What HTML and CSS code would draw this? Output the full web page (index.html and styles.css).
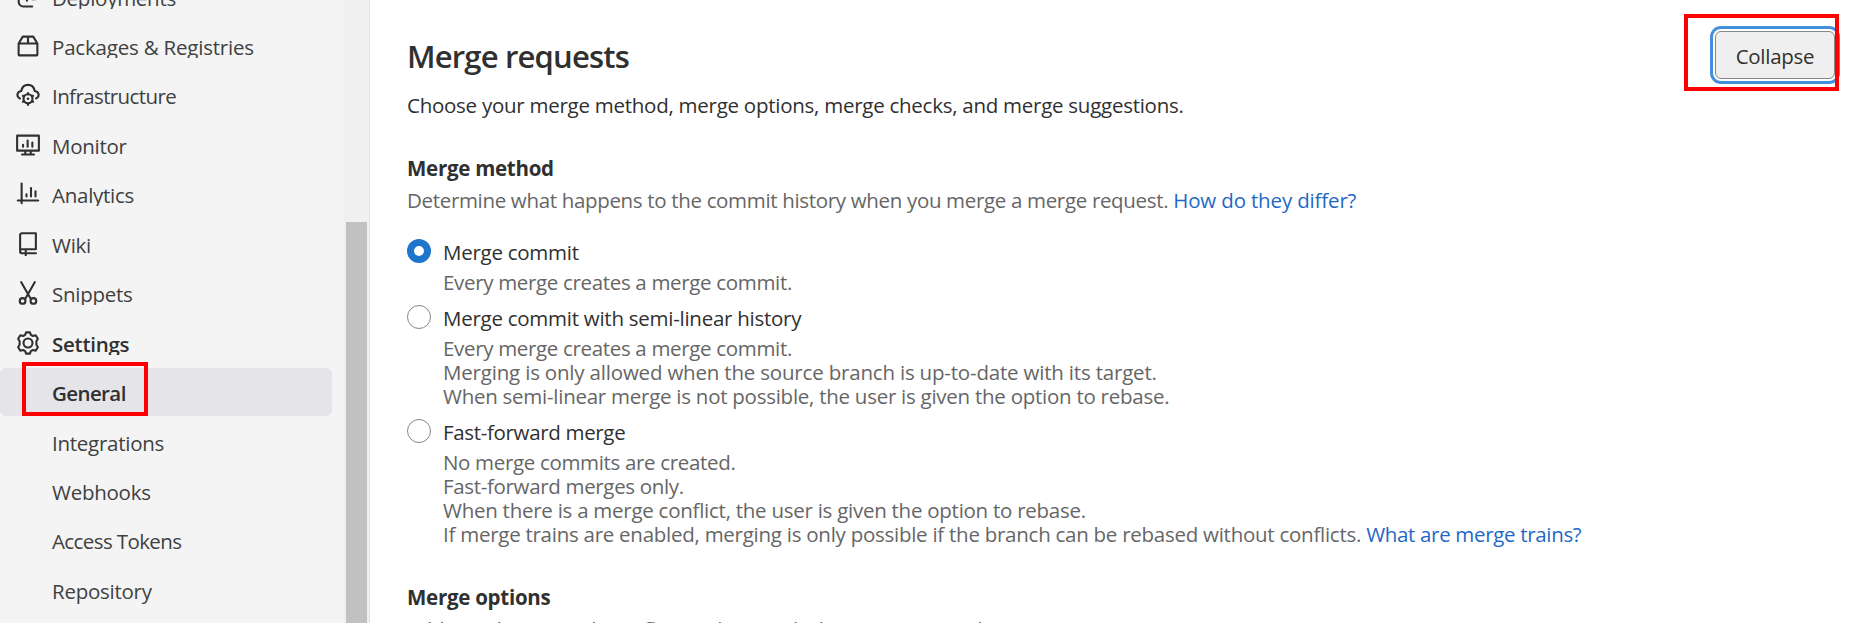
FILE: index.html
```html
<!DOCTYPE html>
<html lang="en">
<head>
<meta charset="utf-8">
<title>General settings</title>
<link rel="stylesheet" href="styles.css">
</head>
<body>
<div class="page">
  <aside class="sidebar">
    <nav class="nav">
      <a class="item"><svg class="icon" viewBox="0 0 16 16"><path d="M1.8 9.500v1.800a3 3 0 0 0 3 3h6M7.300 9.500v1M11 9.500h1.200l1.800-.2"/></svg><span class="name">Deployments</span></a>
      <a class="item"><svg class="icon" viewBox="0 0 16 16"><path d="M1.750 6.300v7.450a.5.5 0 0 0 .5.5h11.500a.5.5 0 0 0 .5-.5V6.300M1.750 6.300 4.500 1.750h7l2.750 4.550zM8 1.750v4.500"/></svg><span class="name wide">Packages &amp; Registries</span></a>
      <a class="item"><svg class="icon" viewBox="0 0 16 16"><path d="M2.600 10.300C.2 9.200.4 5.600 3.600 5.300 4 2.500 5.800 1.250 8 1.250s4 1.300 4.400 4.050c3.200.3 3.500 3.900 1 5"/><circle cx="8" cy="10.500" r="3"/><circle class="solid" cx="8" cy="10.500" r=".9"/><path d="M8 6.700v.8M8 13.500v1.200M4.600 8.500l.8.500M10.600 12l.8.500M4.600 12.500l.8-.5M10.600 9l.8-.5"/></svg><span class="name narrow">Infrastructure</span></a>
      <a class="item"><svg class="icon" viewBox="0 0 16 16"><path d="M.75 1.750h14.500v10H.75zM6.200 12v2.200M9.800 12v2.200M4 14.300h8M4.700 7.800v1.300M7.750 5v4.100M10.900 6.300v2.800"/></svg><span class="name">Monitor</span></a>
      <a class="item"><svg class="icon" viewBox="0 0 16 16"><path d="M3.750 1v13.200M1.200 12.300h13.600M7 8.200v1.500M10 4v5.700M13 6.200v3.500"/></svg><span class="name">Analytics</span></a>
      <a class="item"><svg class="icon" viewBox="0 0 16 16"><path d="M2.750 12.500V2a1.200 1.200 0 0 1 1.200-1.200h9.300v10.700H4a1.250 1.250 0 0 0-1.250 1.250c0 .8.500 1.400 1.250 1.400h9.300M6.500 12v3.500"/></svg><span class="name">Wiki</span></a>
      <a class="item"><svg class="icon" viewBox="0 0 16 16"><path d="M3.500.8l6.200 10.800M12.500.8 6.300 11.600"/><circle cx="4.400" cy="13.300" r="1.900"/><circle cx="11.600" cy="13.300" r="1.900"/></svg><span class="name">Snippets</span></a>
      <a class="item current"><svg class="icon" viewBox="0 0 16 16"><path d="M6.700.9h2.600l.6 1.700 1.300.75 1.900-.45 1.500 2.300-1 1.600v2.400l1 1.600-1.500 2.300-1.900-.45-1.300.75-.6 1.700H6.700l-.6-1.700-1.300-.75-1.900.45-1.500-2.300 1-1.600V6.800l-1-1.600 1.500-2.300 1.900.45 1.300-.75z"/><circle cx="8" cy="8" r="3"/></svg><span class="name">Settings</span></a>
      <a class="item sub active"><span class="name narrow">General</span><span class="mark mark-general"></span></a>
      <a class="item sub"><span class="name">Integrations</span></a>
      <a class="item sub"><span class="name">Webhooks</span></a>
      <a class="item sub"><span class="name narrow">Access Tokens</span></a>
      <a class="item sub"><span class="name">Repository</span></a>
    </nav>
    <div class="track"><div class="thumb"></div></div>
  </aside>
  <main class="content">
    <header class="head">
      <h1 class="title">Merge requests</h1>
      <div class="action"><button class="collapse">Collapse</button><span class="mark mark-collapse"></span></div>
    </header>
    <p class="lead">Choose your merge method, merge options, merge checks, and merge suggestions.</p>
    <h2 class="subtitle">Merge method</h2>
    <p class="help"><span class="tight">Determine what happens to the commit history when you merge a merge request. </span><a class="link">How do they differ?</a></p>
    <div class="options">
      <div class="option">
        <span class="radio checked"></span>
        <div class="detail">
          <div class="label">Merge commit</div>
          <div class="help tight">Every merge creates a merge commit.</div>
        </div>
      </div>
      <div class="option">
        <span class="radio"></span>
        <div class="detail">
          <div class="label">Merge commit with semi-linear history</div>
          <div class="help"><span class="tight">Every merge creates a merge commit.</span><br><span class="loose">Merging is only allowed when the source branch is up-to-date with its target.</span><br>When semi-linear merge is not possible, the user is given the option to rebase.</div>
        </div>
      </div>
      <div class="option">
        <span class="radio"></span>
        <div class="detail">
          <div class="label tight">Fast-forward merge</div>
          <div class="help"><span class="tight">No merge commits are created.</span><br><span class="tight">Fast-forward merges only.</span><br>When there is a merge conflict, the user is given the option to rebase.<br>If merge trains are enabled, merging is only possible if the branch can be rebased without conflicts. <a class="link tight">What are merge trains?</a></div>
        </div>
      </div>
    </div>
    <h2 class="subtitle">Merge options</h2>
    <p class="help">Additional settings that influence how and when merges are done.</p>
  </main>
</div>
</body>
</html>
```
FILE: styles.css
```css
* { box-sizing: border-box; }
body {
  margin: 0;
  background: #fff;
  color: #303030;
  font-family: "Open Sans", "Noto Sans", sans-serif;
  font-size: 20.5px;
  line-height: 24px;
  letter-spacing: -0.26px;
}
h1, h2, p { margin: 0; }
.page { display: flex; height: 623px; overflow: hidden; }

.sidebar {
  display: flex;
  flex: none;
  width: 370px;
  background: #f4f4f4;
  border-right: 1px solid #e4e4e4;
}
.nav {
  display: flex;
  flex-direction: column;
  gap: 1.45px;
  width: 344px;
  margin-top: -28px;
}
.item {
  position: relative;
  display: flex;
  flex: none;
  align-items: center;
  gap: 12px;
  width: 332px;
  height: 48px;
  padding-left: 16px;
  color: #404040;
}
.icon {
  flex: none;
  width: 24px;
  height: 24px;
  margin-top: 1px;
  fill: none;
  stroke: #303030;
  stroke-width: 1.4;
  stroke-linecap: round;
  stroke-linejoin: round;
}
.solid { fill: #303030; stroke: none; }
.name { height: 23px; margin-top: 2.2px; overflow: hidden; }
.wide { letter-spacing: -0.2px; }
.narrow { letter-spacing: -0.6px; }
.current { color: #303030; font-weight: 600; }
.sub { padding-left: 52px; }
.sub .name { overflow: visible; }
.active {
  background: #e5e4e9;
  border-radius: 6px;
  color: #303030;
  font-weight: 600;
}
.track {
  width: 25px;
  padding: 222px 2px 0;
  background: #f0f0f0;
}
.thumb { height: 401px; background: #c1c1c1; }

.content { flex: 1; padding: 36px 20px 0 37px; }
.head { display: flex; justify-content: space-between; height: 57px; }
.title {
  font-size: 31px;
  font-weight: 560;
  line-height: 40px;
  letter-spacing: -0.82px;
}
.action { position: relative; width: 125px; height: 48px; margin-top: -5px; }
.collapse {
  width: 120px;
  height: 48px;
  padding: 1px 0 0;
  border: 1.5px solid #868686;
  border-radius: 6px;
  background: #efefef;
  box-shadow: 0 0 0 2px #fff, 0 0 0 5px #428fdc;
  color: #303030;
  font: inherit;
  letter-spacing: inherit;
}
.subtitle {
  margin-top: 39px;
  font-size: 20.5px;
  font-weight: 700;
  line-height: 24px;
  letter-spacing: -0.27px;
}
.help { color: #666; }
.loose { letter-spacing: -0.19px; }
.subtitle + .help { margin-top: 8px; }
.link { color: #1f68c5; letter-spacing: -0.16px; }
.tight { letter-spacing: -0.33px; }
.options { display: flex; flex-direction: column; gap: 12px; margin-top: 28px; }
.option { display: flex; gap: 12px; }
.radio {
  flex: none;
  width: 24px;
  height: 24px;
  margin-top: -1px;
  border: 1px solid #868686;
  border-radius: 50%;
  background: #fff;
}
.checked { border: 7.500px solid #1f75cb; }
.detail .help { margin-top: 6px; }

/* Red callout frames drawn over the page */
.mark { position: absolute; border: 4px solid #f00; }
.mark-general { left: 22px; top: -6px; width: 126px; height: 54px; }
.mark-collapse { left: -31px; top: -17px; width: 155px; height: 77px; }
```
